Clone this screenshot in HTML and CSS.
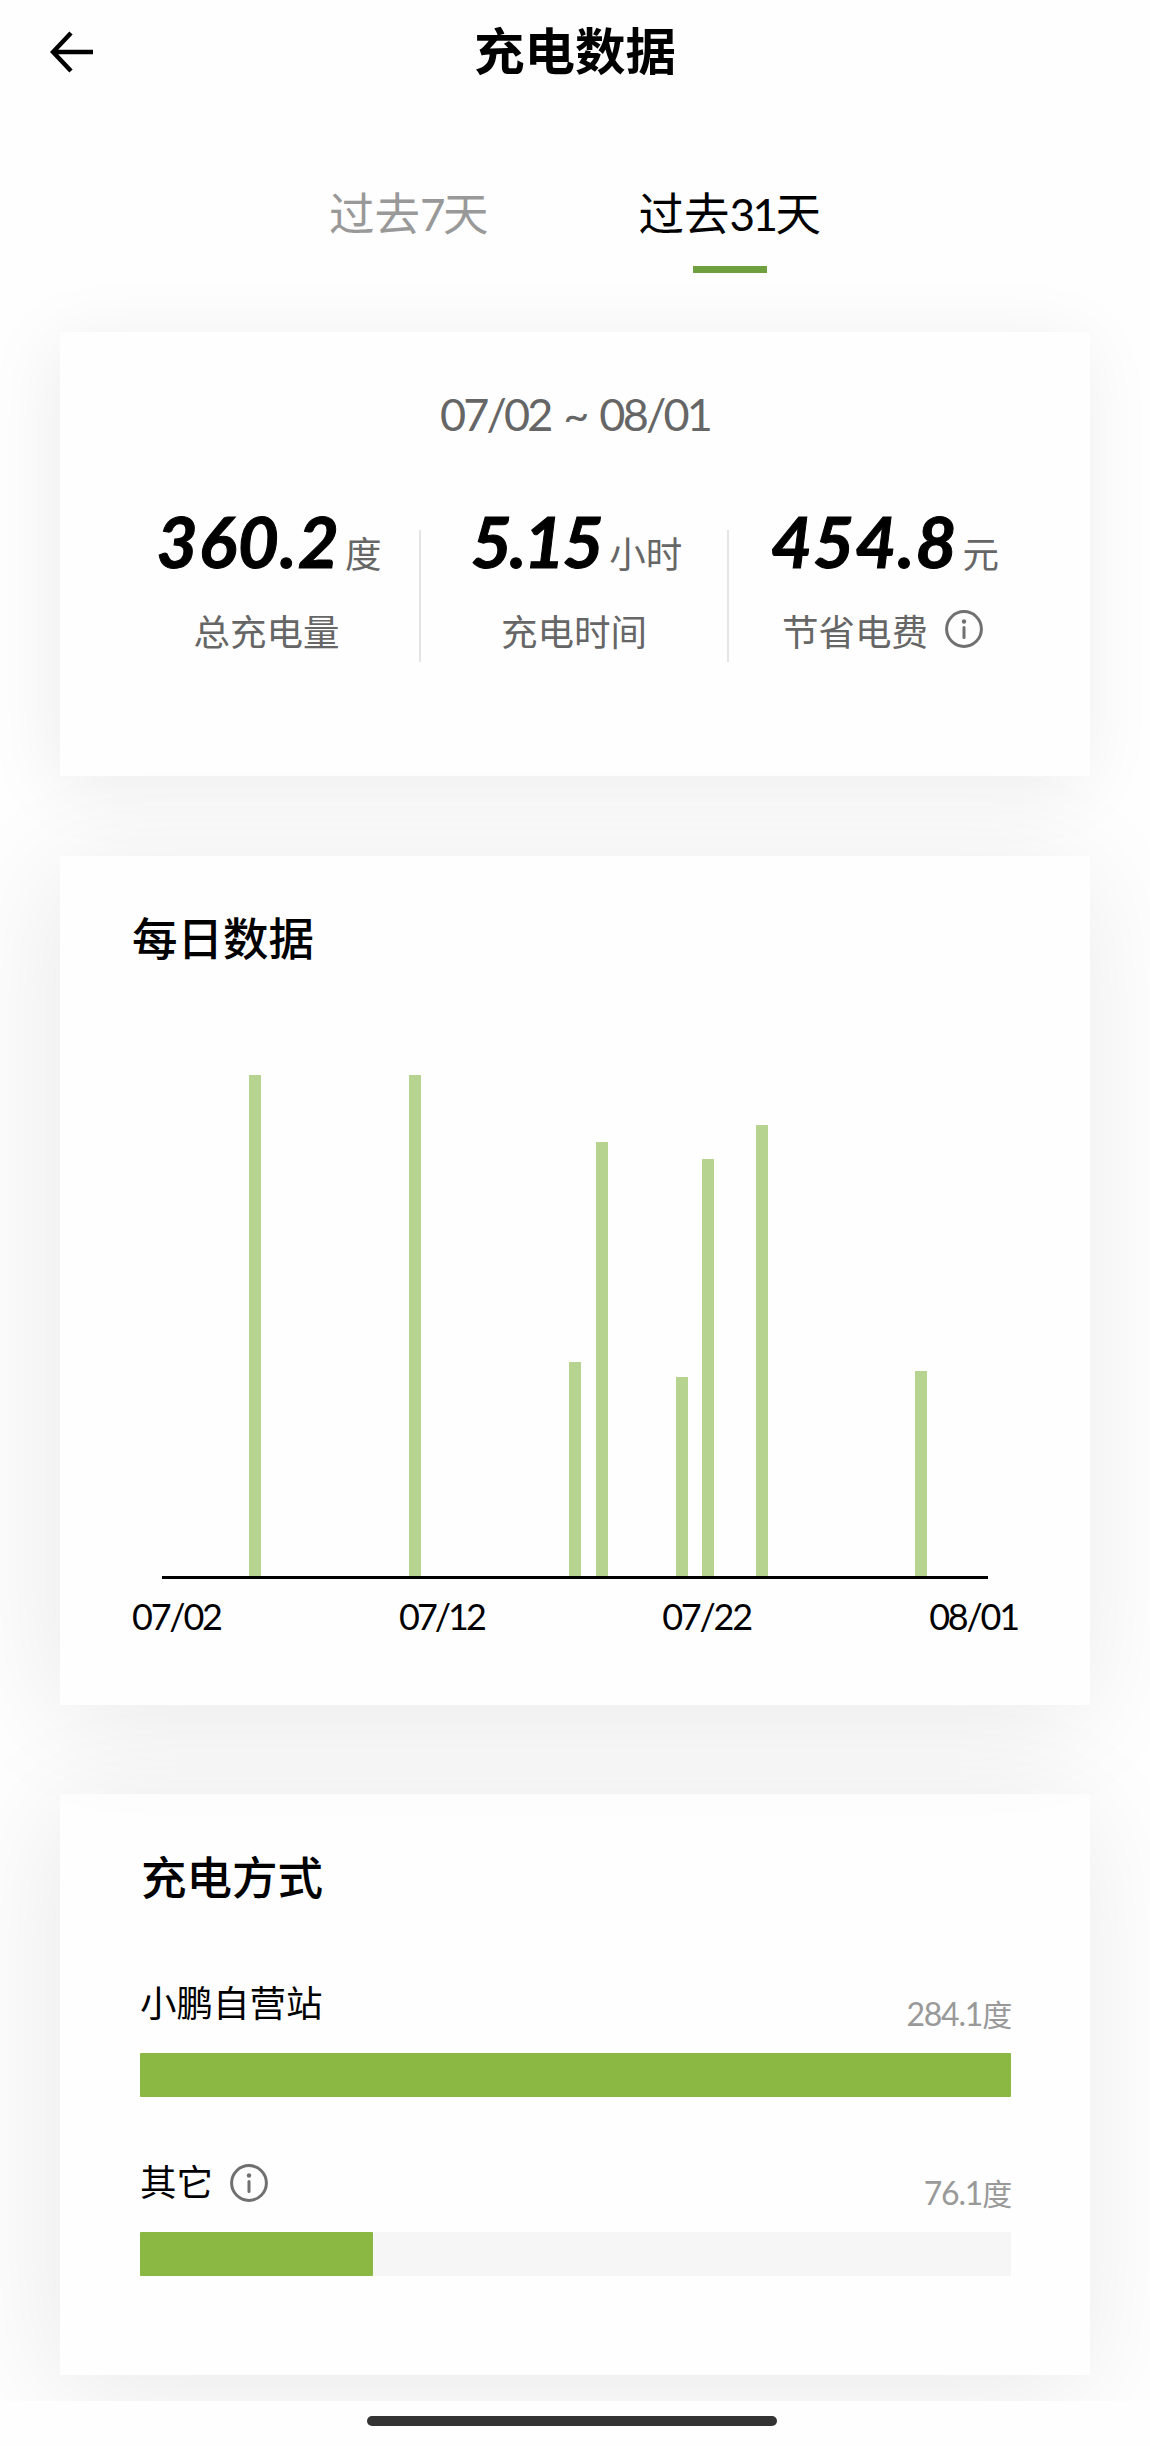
FILE: index.html
```html
<!DOCTYPE html>
<html lang="zh-CN">
    <head>
        <meta charset="utf-8" />
        <title>充电数据</title>
        <link rel="stylesheet" href="styles.css">
    </head>
    <body>
        <div id="page">
            <header class="navbar">
                <svg class="back" viewBox="0 0 44 44"><path d="M21 3 L3 22 L21 41 M3 22 H43" /></svg>
                <h1>充电数据</h1>
            </header>

            <div class="tabs">
                <div class="tab">过去<span class="num">7</span>天</div>
                <div class="tab active">过去<span class="num">31</span>天</div>
            </div>

            <section class="card summary">
                <div class="period">07/02 ~ 08/01</div>
                <div class="stats">
                    <div class="stat">
                        <div class="figure"><b>360.2</b><span>度</span></div>
                        <div class="label">总充电量</div>
                    </div>
                    <div class="stat">
                        <div class="figure"><b class="tight">5.15</b><span>小时</span></div>
                        <div class="label">充电时间</div>
                    </div>
                    <div class="stat">
                        <div class="figure"><b>454.8</b><span>元</span></div>
                        <div class="label">节省电费<svg class="info" viewBox="0 0 38 38"><circle class="ring" cx="19" cy="19" r="17.4" /><circle class="dot" cx="19" cy="11.5" r="2.2" /><path d="M19 17.5 V27.5" /></svg></div>
                    </div>
                </div>
            </section>

            <section class="card daily">
                <h2>每日数据</h2>
                <!-- one column per day, 07/02 is column 1 -->
                <div class="chart">
                    <i style="grid-column: 4; height: 501px"></i>
                    <i style="grid-column: 10; height: 501px"></i>
                    <i style="grid-column: 16; height: 214px"></i>
                    <i style="grid-column: 17; height: 434px"></i>
                    <i style="grid-column: 20; height: 199px"></i>
                    <i style="grid-column: 21; height: 417px"></i>
                    <i style="grid-column: 23; height: 451px"></i>
                    <i style="grid-column: 29; height: 205px"></i>
                </div>
                <div class="axis">
                    <span>07/02</span>
                    <span class="narrow">07/12</span>
                    <span>07/22</span>
                    <span>08/01</span>
                </div>
            </section>

            <section class="card methods">
                <h2>充电方式</h2>
                <div class="method">
                    <div class="row">
                        <div class="name">小鹏自营站</div>
                        <div class="value">284.1<span class="unit">度</span></div>
                    </div>
                    <div class="track"><div class="fill" style="width: 100%"></div></div>
                </div>
                <div class="method">
                    <div class="row">
                        <div class="name">其它<svg class="info" viewBox="0 0 38 38"><circle class="ring" cx="19" cy="19" r="17.4" /><circle class="dot" cx="19" cy="11.5" r="2.2" /><path d="M19 17.5 V27.5" /></svg></div>
                        <div class="value">76.1<span class="unit">度</span></div>
                    </div>
                    <div class="track"><div class="fill" style="width: 26.8%"></div></div>
                </div>
            </section>
        </div>
        <footer class="homebar"><div></div></footer>
    </body>
</html>
```
FILE: styles.css
```css
* {
    box-sizing: border-box;
}
body {
    margin: 0;
    background-color: #fefefe;
    color: #000;
    font-family: "Noto Sans CJK SC", sans-serif;
}
#page {
    height: 2401px;
    padding: 0 60px;
    overflow: hidden;
}
h1, h2 {
    margin: 0;
}
.navbar {
    display: grid;
    grid-template-columns: 44px 1fr 44px;
    align-items: center;
    height: 103px;
    margin: 0 -10px;
}
.back {
    width: 44px;
    height: 44px;
    fill: none;
    stroke: #000;
    stroke-width: 4.5;
}
h1 {
    padding-bottom: 7px;
    font-size: 50.5px;
    line-height: 90px;
    font-weight: 700;
    text-align: center;
}
.tabs {
    display: flex;
    justify-content: center;
    gap: 150px;
    height: 229px;
    padding-top: 73px;
    font-size: 45.5px;
    line-height: 70px;
}
.tab {
    color: #999;
}
.tab.active {
    color: #000;
}
.tab.active::after {
    content: "";
    display: block;
    width: 74px;
    height: 7px;
    margin: 17px auto 0;
    background-color: #6fa03f;
}
.num, .period, .axis, .value {
    font-family: Lato, sans-serif;
}
.num {
    font-size: 44px;
    letter-spacing: -2.5px;
}
.card {
    background-color: #fefefe;
    box-shadow: -7px 14px 110px rgba(0, 0, 0, 0.085);
}
.summary {
    height: 444px;
    padding-top: 52px;
    color: #666;
    box-shadow: -6px 10px 70px rgba(0, 0, 0, 0.07);
}
.period {
    font-size: 45px;
    line-height: 60px;
    text-align: center;
    letter-spacing: -2.8px;
    word-spacing: 4px;
}
.stats {
    display: grid;
    grid-template-columns: 307px 308px 309px;
    justify-content: center;
    margin-top: 63px;
}
.stat {
    position: relative;
    height: 160px;
}
.stat + .stat::before {
    content: "";
    position: absolute;
    left: -1px;
    top: 23px;
    width: 2px;
    height: 132px;
    background-color: #e4e4e4;
}
.figure {
    display: flex;
    justify-content: center;
    align-items: baseline;
    gap: 5px;
    height: 99px;
    margin: -6px 0 6px 5px;
    line-height: 80px;
    font-size: 36.5px;
}
.figure b {
    color: #000;
    font: italic 700 71px/80px Lato, sans-serif;
    letter-spacing: 1px;
    -webkit-text-stroke: 1px #000;
}
.figure .tight {
    letter-spacing: -2.5px;
    margin-right: 3px;
}
.label {
    display: flex;
    justify-content: center;
    font-size: 36.5px;
    line-height: 50px;
}
.info {
    width: 38px;
    height: 38px;
    margin-left: 17px;
    fill: none;
    stroke: #707070;
    stroke-width: 3;
    stroke-linecap: round;
}
.label .info {
    margin-top: 4px;
}
.name .info {
    margin-top: 5px;
}
.info .dot {
    fill: #707070;
    stroke: none;
}
h2 {
    font-size: 45.5px;
    line-height: 60px;
    font-weight: 500;
}
.daily {
    position: relative;
    z-index: 1;
    height: 849px;
    margin-top: 80px;
    padding: 50px 72px 0;
}
.chart {
    display: grid;
    grid-template-columns: repeat(31, 1fr);
    align-items: end;
    justify-items: center;
    width: 826px;
    height: 506px;
    margin: 107px auto 0;
    border-bottom: 3px solid #000;
}
.chart i {
    grid-row: 1;
    width: 12px;
    background-color: #b6d48f;
}
.axis {
    display: flex;
    justify-content: space-between;
    margin-top: 15px;
    font-size: 36px;
    line-height: 44px;
    letter-spacing: -2.2px;
}
.axis .narrow {
    letter-spacing: -3px;
}
.methods {
    height: 581px;
    margin-top: 89px;
    padding: 51px 79px 0 80px;
}
.methods h2 {
    padding: 0 0 13px 1px;
}
.method {
    margin-top: 45px;
}
.row {
    display: flex;
    justify-content: space-between;
    height: 90px;
    padding-top: 13px;
}
.name {
    display: flex;
    align-items: center;
    height: 50px;
    font-size: 36.5px;
}
.value {
    padding-top: 17px;
    color: #999;
    font-size: 32px;
    line-height: 40px;
    letter-spacing: -1.2px;
}
.unit {
    font-family: "Noto Sans CJK SC", sans-serif;
    font-size: 30px;
}
.track {
    height: 44px;
    background-color: #f6f6f6;
}
.fill {
    height: 44px;
    border-radius: 1px;
    background-color: #8ab842;
}
.homebar {
    height: 45px;
    padding: 15px 0 0 367px;
    background-color: #fefefe;
}
.homebar div {
    width: 410px;
    height: 10px;
    border-radius: 5px;
    background-color: #333;
}
```
